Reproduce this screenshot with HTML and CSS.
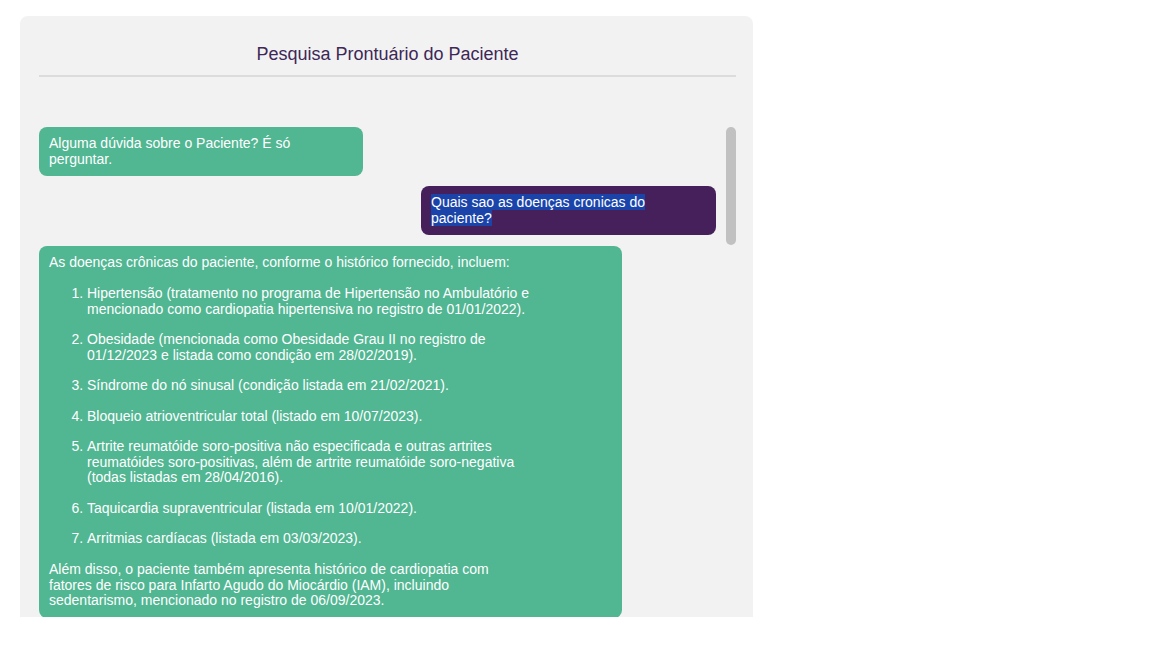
FILE: index.html
```html
<!DOCTYPE html>
<html lang="pt-BR">
<head>
<meta charset="utf-8">
<title>Pesquisa Prontuário do Paciente</title>
<link rel="stylesheet" href="styles.css">
</head>
<body>
<div class="page">
  <section class="panel">
    <header class="panel-header">
      <h2 class="title">Pesquisa Prontuário do Paciente</h2>
    </header>
    <div class="chat">
      <div class="messages">
        <div class="msg bot intro">Alguma dúvida sobre o Paciente? É só perguntar.</div>
        <div class="msg user"><span class="sel">Quais sao as doenças cronicas do paciente?</span></div>
        <div class="msg bot answer">
          <div class="md">
            <p>As doenças crônicas do paciente, conforme o histórico fornecido, incluem:</p>
            <ol>
              <li>Hipertensão (tratamento no programa de Hipertensão no Ambulatório e mencionado como cardiopatia hipertensiva no registro de 01/01/2022).</li>
              <li>Obesidade (mencionada como Obesidade Grau II no registro de 01/12/2023 e listada como condição em 28/02/2019).</li>
              <li>Síndrome do nó sinusal (condição listada em 21/02/2021).</li>
              <li>Bloqueio atrioventricular total (listado em 10/07/2023).</li>
              <li>Artrite reumatóide soro-positiva não especificada e outras artrites reumatóides soro-positivas, além de artrite reumatóide soro-negativa (todas listadas em 28/04/2016).</li>
              <li>Taquicardia supraventricular (listada em 10/01/2022).</li>
              <li>Arritmias cardíacas (listada em 03/03/2023).</li>
            </ol>
            <p>Além disso, o paciente também apresenta histórico de cardiopatia com fatores de risco para Infarto Agudo do Miocárdio (IAM), incluindo sedentarismo, mencionado no registro de 06/09/2023.</p>
          </div>
        </div>
      </div>
      <div class="scroll-thumb"></div>
    </div>
  </section>
</div>
</body>
</html>
```

FILE: styles.css
```css
* { box-sizing: border-box; }

html, body {
  margin: 0;
  padding: 0;
  background: #ffffff;
}

body {
  font-family: "Liberation Sans", Arial, sans-serif;
  font-size: 14px;
  color: #222;
}

.page {
  padding: 16px 0 0 20px;
}

.panel {
  width: 733px;
  height: 601px;
  background: #f2f2f2;
  border-radius: 8px 8px 0 0;
  padding: 19px 17px 0 19px;
  overflow: hidden;
  display: flex;
  flex-direction: column;
}

.panel-header {
  padding: 9px 0 10px;
  border-bottom: 2px solid #dcdcdc;
}

.title {
  margin: 0;
  font-size: 18px;
  line-height: 21px;
  font-weight: normal;
  text-align: center;
  color: #3d2857;
}

.chat {
  position: relative;
  margin-top: 50px;
  flex: 1;
  overflow: hidden;
}

.messages {
  display: flex;
  flex-direction: column;
  align-items: flex-start;
  gap: 10px;
  padding-right: 20px;
}

.msg {
  padding: 9px 10px;
  border-radius: 8px;
  color: #ffffff;
  font-size: 14px;
  line-height: 15.5px;
}

.bot {
  background: #51b692;
}

.user {
  background: #45205a;
  align-self: flex-end;
  width: 295px;
}

.intro {
  width: 324px;
  padding-right: 16px;
}

.answer {
  width: 583px;
  margin-top: 1px;
}

.sel {
  background: #1b44ab;
}

.md {
  max-width: 484px;
}

.md p {
  margin: 0;
}

.md ol {
  margin: 15.5px 0;
  padding-left: 38px;
}

.md li + li {
  margin-top: 15px;
}

.scroll-thumb {
  position: absolute;
  top: 0;
  right: 0;
  width: 10px;
  height: 118px;
  border-radius: 5px;
  background: #c1c1c1;
}
```
